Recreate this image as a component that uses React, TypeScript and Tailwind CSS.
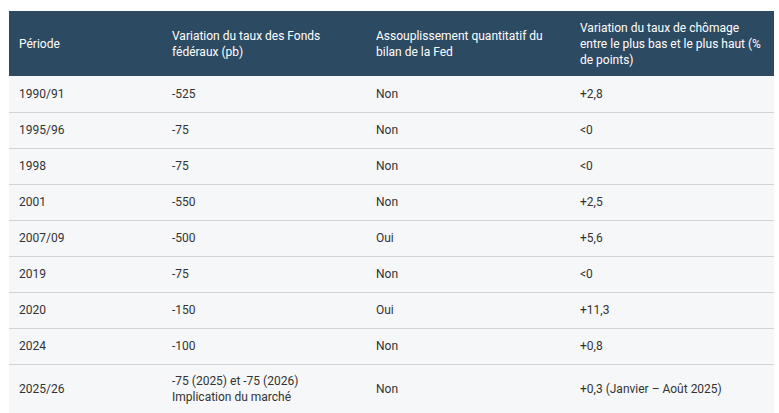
const rows: [string, string, string, string][] = [
  ["1990/91", "-525", "Non", "+2,8"],
  ["1995/96", "-75", "Non", "<0"],
  ["1998", "-75", "Non", "<0"],
  ["2001", "-550", "Non", "+2,5"],
  ["2007/09", "-500", "Oui", "+5,6"],
  ["2019", "-75", "Non", "<0"],
  ["2020", "-150", "Oui", "+11,3"],
  ["2024", "-100", "Non", "+0,8"],
];

export default function App() {
  return (
    <div className="bg-white pl-[9px] pr-[5px] pt-[11px] font-['Roboto',sans-serif] text-[12px] leading-[16px] text-[#333]">
      <table className="w-[765px] table-fixed border-collapse">
        <colgroup>
          <col className="w-[153px]" />
          <col className="w-[204px]" />
          <col className="w-[204px]" />
          <col className="w-[204px]" />
        </colgroup>
        <thead>
          <tr className="h-[65px] bg-[#2d4a63] text-left text-white">
            <th className="px-[10px] align-middle font-normal">Période</th>
            <th className="px-[10px] align-middle font-normal">
              Variation du taux des Fonds fédéraux (pb)
            </th>
            <th className="px-[10px] align-middle font-normal">
              Assouplissement quantitatif du bilan de la Fed
            </th>
            <th className="px-[10px] align-middle font-normal">
              Variation du taux de chômage entre le plus bas et le plus haut (% de points)
            </th>
          </tr>
        </thead>
        <tbody className="bg-[#f6f7f9]">
          {rows.map((r) => (
            <tr key={r[0]} className="h-[36px] border-b border-[#d2d3d5]">
              {r.map((c, i) => (
                <td key={i} className="px-[10px] align-middle">
                  {c}
                </td>
              ))}
            </tr>
          ))}
          <tr className="h-[50px] border-b border-[#d2d3d5]">
            <td className="px-[10px] align-middle">2025/26</td>
            <td className="px-[10px] align-middle">
              -75 (2025) et -75 (2026)
              <br />
              Implication du marché
            </td>
            <td className="px-[10px] align-middle">Non</td>
            <td className="px-[10px] align-middle">+0,3 (Janvier – Août 2025)</td>
          </tr>
        </tbody>
      </table>
    </div>
  );
}
